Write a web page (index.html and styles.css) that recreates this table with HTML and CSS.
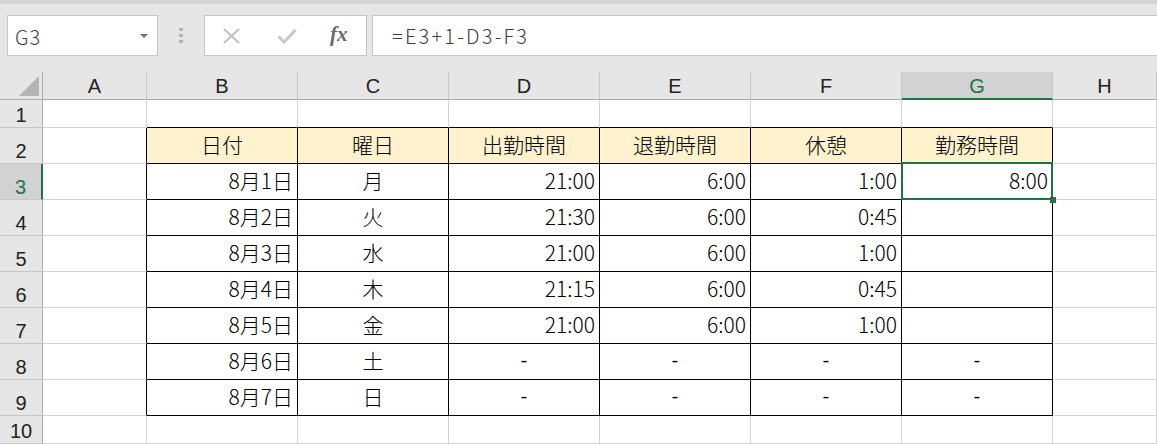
FILE: index.html
```html
<!DOCTYPE html>
<html lang="ja">
<head>
<meta charset="utf-8">
<title>Excel</title>
<link rel="stylesheet" href="styles.css">
</head>
<body>
<div class="app">
  <div class="fbar">
    <div class="namebox"><span>G3</span><i class="arrow"></i></div>
    <div class="dots"><i></i><i></i><i></i></div>
    <div class="btns">
      <svg class="ico" width="20" height="16" viewBox="0 0 20 16"><path d="M2 1 L17 15 M17 1 L2 15" stroke="#c3c3c3" stroke-width="2.2" fill="none"/></svg>
      <svg class="ico" width="20" height="16" viewBox="0 0 20 16"><path d="M1.5 8.5 L7 14 L18.5 2" stroke="#c8c8c8" stroke-width="3" fill="none"/></svg>
      <span class="fx">fx</span>
    </div>
    <div class="finput">=E3+1-D3-F3</div>
  </div>
  <div class="sheet">
    <div class="corner"><i></i></div>
    <div class="ch">A</div><div class="ch">B</div><div class="ch">C</div><div class="ch">D</div><div class="ch">E</div><div class="ch">F</div><div class="ch on">G</div><div class="ch">H</div>

    <div class="rh">1</div>
    <div class="c"></div><div class="c bb"></div><div class="c bb"></div><div class="c bb"></div><div class="c bb"></div><div class="c bb"></div><div class="c bb"></div><div class="c"></div>

    <div class="rh">2</div>
    <div class="c br"></div>
    <div class="c t hdr">日付</div><div class="c t hdr">曜日</div><div class="c t hdr">出勤時間</div><div class="c t hdr">退勤時間</div><div class="c t hdr">休憩</div><div class="c t hdr">勤務時間</div>
    <div class="c"></div>

    <div class="rh on">3</div>
    <div class="c br"></div>
    <div class="c t r">8月1日</div><div class="c t m">月</div><div class="c t r">21:00</div><div class="c t r">6:00</div><div class="c t r">1:00</div><div class="c t r sel">8:00</div>
    <div class="c"></div>

    <div class="rh">4</div>
    <div class="c br"></div>
    <div class="c t r">8月2日</div><div class="c t m">火</div><div class="c t r">21:30</div><div class="c t r">6:00</div><div class="c t r">0:45</div><div class="c t r"></div>
    <div class="c"></div>

    <div class="rh">5</div>
    <div class="c br"></div>
    <div class="c t r">8月3日</div><div class="c t m">水</div><div class="c t r">21:00</div><div class="c t r">6:00</div><div class="c t r">1:00</div><div class="c t r"></div>
    <div class="c"></div>

    <div class="rh">6</div>
    <div class="c br"></div>
    <div class="c t r">8月4日</div><div class="c t m">木</div><div class="c t r">21:15</div><div class="c t r">6:00</div><div class="c t r">0:45</div><div class="c t r"></div>
    <div class="c"></div>

    <div class="rh">7</div>
    <div class="c br"></div>
    <div class="c t r">8月5日</div><div class="c t m">金</div><div class="c t r">21:00</div><div class="c t r">6:00</div><div class="c t r">1:00</div><div class="c t r"></div>
    <div class="c"></div>

    <div class="rh">8</div>
    <div class="c br"></div>
    <div class="c t r">8月6日</div><div class="c t m">土</div><div class="c t m dash">-</div><div class="c t m dash">-</div><div class="c t m dash">-</div><div class="c t m dash">-</div>
    <div class="c"></div>

    <div class="rh">9</div>
    <div class="c br"></div>
    <div class="c t r">8月7日</div><div class="c t m">日</div><div class="c t m dash">-</div><div class="c t m dash">-</div><div class="c t m dash">-</div><div class="c t m dash">-</div>
    <div class="c"></div>

    <div class="rh">10</div>
    <div class="c"></div><div class="c"></div><div class="c"></div><div class="c"></div><div class="c"></div><div class="c"></div><div class="c"></div><div class="c"></div>
  </div>
</div>
</body>
</html>
```

FILE: styles.css
```css
html, body {
  margin: 0;
  padding: 0;
}
body {
  width: 1157px;
  height: 444px;
  overflow: hidden;
  background: #ffffff;
  font-family: "Liberation Sans", Arial, sans-serif;
}
.app {
  display: flex;
  flex-direction: column;
  height: 444px;
}

/* formula bar */
.fbar {
  height: 72px;
  box-sizing: border-box;
  background: #e6e6e6;
  border-top: 4px solid #d4d4d4;
  padding-top: 11px;
  display: flex;
  align-items: flex-start;
}
.namebox {
  margin-left: 7px;
  width: 151px;
  height: 41px;
  box-sizing: border-box;
  background: #fff;
  border: 1px solid #c6c6c6;
  display: flex;
  align-items: center;
  padding-left: 7px;
  font-family: "Noto Sans CJK JP", "Noto Sans", sans-serif;
  font-weight: 300;
  font-size: 20px;
  letter-spacing: 1px;
  color: #404040;
}
.namebox span {
  margin-top: 2px;
}
.arrow {
  margin-left: auto;
  margin-right: 9px;
  width: 0;
  height: 0;
  border-left: 4px solid transparent;
  border-right: 4px solid transparent;
  border-top: 4px solid #707070;
}
.dots {
  width: 46px;
  height: 41px;
  display: flex;
  flex-direction: column;
  align-items: center;
  justify-content: center;
  gap: 3px;
}
.dots i {
  display: block;
  width: 4px;
  height: 3px;
  background: #b4b4b4;
}
.btns {
  width: 163px;
  height: 41px;
  box-sizing: border-box;
  background: #fff;
  border: 1px solid #c6c6c6;
  display: flex;
  align-items: center;
  padding-left: 17px;
  gap: 35px;
}
.ico {
  display: block;
}
.fx {
  font-family: "Liberation Serif", "Times New Roman", serif;
  font-style: italic;
  font-weight: bold;
  font-size: 21px;
  color: #6a6a6a;
  margin-left: -2px;
  margin-top: -2px;
}
.finput {
  margin-left: 5px;
  flex: 1;
  height: 41px;
  box-sizing: border-box;
  background: #fff;
  border: 1px solid #c6c6c6;
  border-right: none;
  padding-left: 19px;
  display: flex;
  align-items: center;
  font-family: "Noto Sans CJK JP", "Noto Sans", sans-serif;
  font-weight: 300;
  font-size: 20px;
  letter-spacing: 2.2px;
  color: #404040;
}

/* sheet */
.sheet {
  flex: 1;
  display: grid;
  grid-template-columns: 43px 104px repeat(6, 151px) 1fr;
  grid-template-rows: 28px 28px repeat(8, 36px) 1fr;
}
.corner {
  background: #e6e6e6;
  border-right: 1px solid #ababab;
  border-bottom: 1px solid #ababab;
  display: flex;
  align-items: flex-end;
  justify-content: flex-end;
  padding: 0 3px 3px 0;
}
.corner i {
  display: block;
  width: 0;
  height: 0;
  border-left: 20px solid transparent;
  border-bottom: 20px solid #b4b4b4;
}
.ch {
  background: #e6e6e6;
  border-right: 1px solid #c8c8c8;
  border-bottom: 1px solid #ababab;
  display: flex;
  align-items: center;
  justify-content: center;
  font-size: 20px;
  color: #222;
  line-height: 20px;
  padding-top: 1px;
}
.ch.on {
  background: #d2d2d2;
  color: #217346;
  border-bottom: 2px solid #217346;
}
.rh {
  background: #e6e6e6;
  border-right: 1px solid #ababab;
  border-bottom: 1px solid #c8c8c8;
  display: flex;
  align-items: flex-end;
  justify-content: center;
  font-size: 20px;
  line-height: 20px;
  color: #222;
  padding-bottom: 2px;
}
.rh.on {
  background: #d2d2d2;
  color: #217346;
  border-right: 2px solid #217346;
}
.c {
  border-right: 1px solid #d4d4d4;
  border-bottom: 1px solid #d4d4d4;
  display: flex;
  align-items: flex-end;
  padding: 0 4px 8px 4px;
  font-family: "Noto Sans CJK JP", sans-serif;
  font-weight: 300;
  font-size: 21px;
  line-height: 21px;
  color: #000;
  min-width: 0;
}
.c.br {
  border-right-color: #000;
}
.c.bb {
  border-bottom-color: #000;
}
.c.t {
  border-right-color: #000;
  border-bottom-color: #000;
}
.c.hdr {
  background: #fff2cc;
  justify-content: center;
}
.c.r {
  justify-content: flex-end;
}
.c.m {
  justify-content: center;
}
.c.dash {
  font-family: "Liberation Mono", monospace;
  font-weight: 400;
  font-size: 18px;
  padding-bottom: 6px;
}
.c.sel {
  position: relative;
}
.c.sel::after {
  content: "";
  position: absolute;
  top: -2px;
  left: -1px;
  right: -1px;
  bottom: -1px;
  border: 2px solid #217346;
}
.c.sel::before {
  content: "";
  position: absolute;
  right: -4px;
  bottom: -4px;
  width: 6px;
  height: 6px;
  background: #217346;
  z-index: 2;
}
```
